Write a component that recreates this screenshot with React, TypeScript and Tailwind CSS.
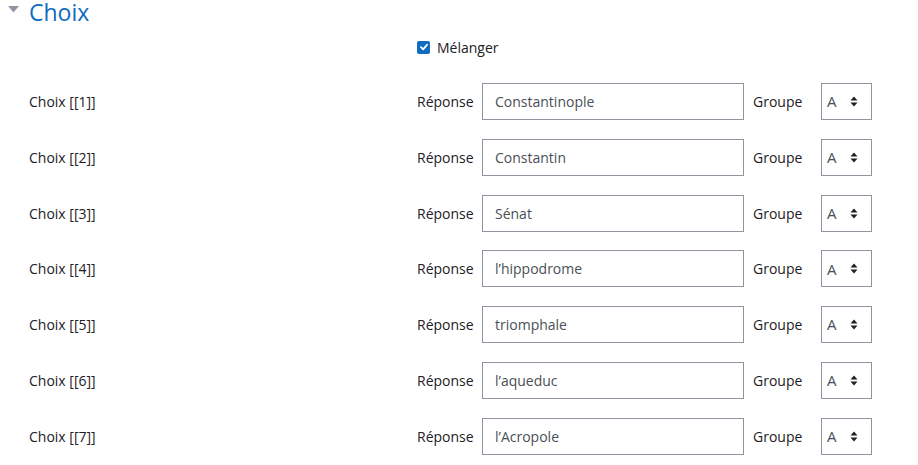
const choices = [
  "Constantinople",
  "Constantin",
  "Sénat",
  "l’hippodrome",
  "triomphale",
  "l’aqueduc",
  "l’Acropole",
];

function SelectArrows() {
  return (
    <svg className="w-[8px] h-[11px]" viewBox="0 0 8 11" fill="#1d2125">
      <path d="M4 0.5L7.5 4.5H0.5Z" />
      <path d="M4 10.5L7.5 6.5H0.5Z" />
    </svg>
  );
}

export default function App() {
  return (
    <div
      className="w-[918px] h-[465px] bg-white overflow-hidden text-[#1d2125]"
      style={{ fontFamily: '"Open Sans", "Noto Sans", sans-serif' }}
    >
      <div className="flex items-start h-[26px]">
        <svg className="ml-[8px] mt-[6px] w-[11px] h-[7px]" viewBox="0 0 11 7" fill="#8f959e">
          <path d="M0 0H11L5.5 6.5Z" />
        </svg>
        <h3 className="ml-[10px] text-[23px] leading-[25px] text-[#0f6cbf]">Choix</h3>
      </div>

      <div className="flex items-center h-[42px] pl-[417px]">
        <span className="w-[13px] h-[13px] rounded-[2px] bg-[#0f6cbf] flex items-center justify-center">
          <svg className="w-[10px] h-[10px]" viewBox="0 0 10 10" fill="none" stroke="white" strokeWidth={1.8} strokeLinecap="round" strokeLinejoin="round">
            <path d="M2 5.2L4.1 7.3L8 2.8" />
          </svg>
        </span>
        <span className="ml-[7px] text-[14px]">Mélanger</span>
      </div>

      <div className="pt-[15px]">
        {choices.map((c, i) => (
          <div key={i} className="flex items-start h-[55.8px] pl-[29px] text-[14px]">
            <div className="w-[388px] h-[37px] flex items-center">Choix [[{i + 1}]]</div>
            <div className="w-[65px] h-[37px] flex items-center">Réponse</div>
            <div className="w-[262px] h-[37px] border border-[#8f959e] flex items-center pl-[12px] text-[#495057]">
              {c}
            </div>
            <div className="w-[77px] h-[37px] flex items-center pl-[9px]">Groupe</div>
            <div className="w-[51px] h-[37px] border border-[#8f959e] flex items-center pl-[5px] pr-[13px] justify-between text-[#495057]">
              <span className="text-[15px]">A</span>
              <SelectArrows />
            </div>
          </div>
        ))}
      </div>
    </div>
  );
}
